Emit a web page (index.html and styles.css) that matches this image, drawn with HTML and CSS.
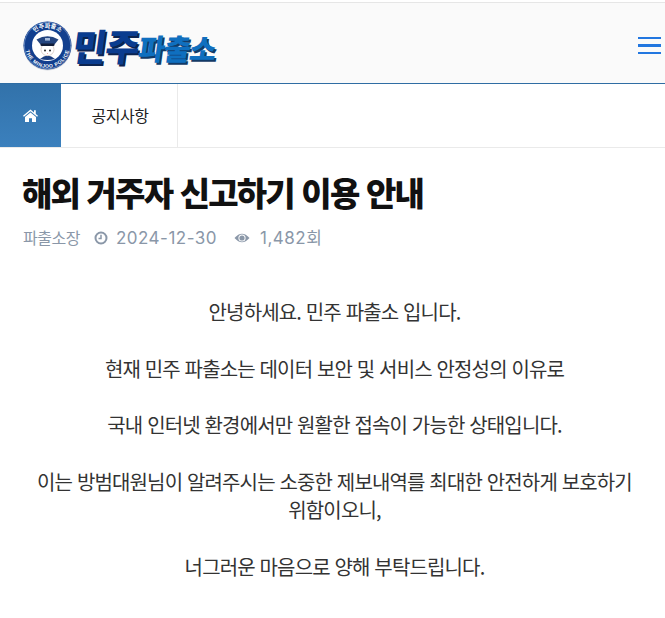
FILE: index.html
```html
<!DOCTYPE html>
<html lang="ko">
<head>
    <meta charset="UTF-8">
    <meta name="viewport" content="width=device-width, initial-scale=1.0">
    <title>해외 거주자 신고하기 이용 안내</title>
    <link rel="stylesheet" href="styles.css">
</head>
<body>
    <!-- header -->
    <header class="site-header">
        <a class="logo" href="#">
            <svg class="logo__badge" width="49" height="50" viewBox="0 0 49 50" xmlns="http://www.w3.org/2000/svg">
                <defs>
                    <path id="arcTop" d="M6.500 24.500 A18 18 0 0 1 42.500 24.500"></path>
                    <path id="arcBottom" d="M2.600 21 A22.200 22.200 0 1 0 46.400 21"></path>
                </defs>
                <circle cx="24.500" cy="25.500" r="24" fill="#d5d8de"></circle>
                <circle cx="24.500" cy="24.500" r="24" fill="#123f8e"></circle>
                <circle cx="24.500" cy="24.500" r="23.200" fill="none" stroke="#6f8fc4" stroke-width="0.800"></circle>
                <circle cx="24.500" cy="24.500" r="15.500" fill="#fff"></circle>
                <text class="logo__arc" font-size="6" fill="#fff"><textPath href="#arcTop" startOffset="50%" text-anchor="middle">민주파출소</textPath></text>
                <text class="logo__arc" font-size="5" fill="#fff" letter-spacing="0.500"><textPath href="#arcBottom" startOffset="50%" text-anchor="middle">THE MINJOO POLICE</textPath></text>
                <!-- police character -->
                <path d="M17 38 Q24.500 31 32 38 Q24.500 40 17 38 Z" fill="#1c3f80"></path>
                <ellipse cx="24.500" cy="28.500" rx="6.500" ry="6.200" fill="#fff" stroke="#c9b7ad" stroke-width="0.600"></ellipse>
                <circle cx="22" cy="29.500" r="1" fill="#222"></circle>
                <circle cx="27" cy="29.500" r="1" fill="#222"></circle>
                <path d="M23.800 32 H25.200 L24.500 32.800 Z" fill="#d9534f"></path>
                <path d="M13.500 18.500 Q24.500 12 35.500 18.500 L31.500 23.500 H17.500 Z" fill="#24457f"></path>
                <rect x="17.500" y="22.500" width="14" height="2.400" rx="1.200" fill="#111d38"></rect>
                <rect x="22" y="17" width="5" height="2.600" fill="#a9bedd"></rect>
            </svg>
            <span class="logo__text"><b class="logo__main">민주</b><b class="logo__sub">파출소</b></span>
        </a>
        <button class="menu-btn" type="button" aria-label="메뉴">
            <span></span><span></span><span></span>
        </button>
    </header>

    <nav class="tabs">
        <a class="tabs__home" href="#" aria-label="홈">
            <svg width="15" height="13" viewBox="0 0 15 13" xmlns="http://www.w3.org/2000/svg">
                <path d="M7.500 0.500 L11 3.400 V1.200 H12.800 V4.900 L15 6.800 L14.100 7.800 L7.500 2.300 L0.900 7.800 L0 6.800 Z" fill="#fff"></path>
                <path d="M7.500 3.400 L13 8 V13 H9 V9.200 H6 V13 H2 V8 Z" fill="#fff"></path>
            </svg>
        </a>
        <a class="tabs__item" href="#">공지사항</a>
    </nav>

    <main class="post">
        <h1 class="post__title">해외 거주자 신고하기 이용 안내</h1>
        <div class="post__meta">
            <span class="post__author">파출소장</span>
            <span class="post__meta-item">
                <svg width="14" height="14" viewBox="0 0 14 14" xmlns="http://www.w3.org/2000/svg">
                    <circle cx="7" cy="7" r="5.500" fill="none" stroke="#8a97a8" stroke-width="2"></circle>
                    <path d="M7 3.800 V7.500 H4.500" fill="none" stroke="#8a97a8" stroke-width="1.500"></path>
                </svg>
                2024-12-30
            </span>
            <span class="post__meta-item post__meta-item--views">
                <svg width="16" height="12" viewBox="0 0 16 12" xmlns="http://www.w3.org/2000/svg">
                    <path d="M0.500 6 Q8 -2.500 15.500 6 Q8 14.500 0.500 6 Z" fill="#8a97a8"></path>
                    <circle cx="8" cy="6" r="3.600" fill="#fff"></circle>
                    <circle cx="8" cy="6" r="2.600" fill="#8a97a8"></circle>
                </svg>
                1,482회
            </span>
        </div>
        <div class="post__body">
            <p>안녕하세요. 민주 파출소 입니다.</p>
            <p>현재 민주 파출소는 데이터 보안 및 서비스 안정성의 이유로</p>
            <p>국내 인터넷 환경에서만 원활한 접속이 가능한 상태입니다.</p>
            <p>이는 방범대원님이 알려주시는 소중한 제보내역를 최대한 안전하게 보호하기 위함이오니,</p>
            <p>너그러운 마음으로 양해 부탁드립니다.</p>
        </div>
    </main>
</body>
</html>
```

FILE: styles.css
```css
*{
    margin: 0;
    padding: 0;
    box-sizing: border-box;
}
body{
    background-color: #fff;
    font-family: "Noto Sans CJK KR", "Open Sans", sans-serif;
    color: #333;
    overflow: hidden;
}
a{
    text-decoration: none;
    color: inherit;
}
.site-header{
    height: 82px;
    margin-top: 2px;
    border-top: 1px solid #e6e6e6;
    border-bottom: 1px solid #2f6da3;
    background-color: #fafafa;
    display: flex;
    align-items: center;
    justify-content: space-between;
    padding: 0 4px 0 23px;
}
.logo{
    display: flex;
    align-items: center;
    gap: 1px;
    margin-top: 6px;
}
.logo__arc{
    font-family: "Liberation Sans", "Noto Sans CJK KR", sans-serif;
    font-weight: 700;
}
.logo__text{
    display: flex;
    align-items: flex-end;
    transform: skewX(-8deg);
    font-weight: 900;
    letter-spacing: -1px;
    margin-top: -2px;
}
.logo__main{
    font-size: 37px;
    line-height: 44px;
    font-weight: 900;
    color: #0a3c8f;
    text-shadow: 2px 2px 0 #0c2450;
}
.logo__sub{
    font-size: 29px;
    line-height: 40px;
    font-weight: 900;
    color: #0f6fbf;
    text-shadow: 2px 2px 0 #123a66;
}
.menu-btn{
    width: 23px;
    height: 17px;
    margin-top: 5px;
    border: none;
    background: none;
    display: flex;
    flex-direction: column;
    justify-content: space-between;
}
.menu-btn span{
    display: block;
    height: 2px;
    background-color: #2277e0;
}
.menu-btn span:nth-child(2){
    height: 3px;
}
.tabs{
    height: 64px;
    display: flex;
    border-bottom: 1px solid #eaeaea;
}
.tabs__home{
    width: 61px;
    display: flex;
    align-items: center;
    justify-content: center;
    background: linear-gradient(#3272aa, #3b80bd);
}
.tabs__item{
    width: 117px;
    display: flex;
    align-items: center;
    justify-content: center;
    border-right: 1px solid #eaeaea;
    padding: 0 0 2px 2px;
    font-size: 16px;
    letter-spacing: -0.5px;
    color: #222;
}
.post{
    padding: 22px 22px 0;
}
.post__title{
    font-size: 33px;
    line-height: 44px;
    font-weight: 900;
    letter-spacing: -1.8px;
    color: #111;
}
.post__meta{
    margin-top: 12px;
    display: flex;
    align-items: center;
    gap: 14px;
    font-family: "Inter", "Noto Sans CJK KR", sans-serif;
    font-size: 17px;
    line-height: 24px;
    color: #8a97a8;
    letter-spacing: 0.5px;
}
.post__author{
    font-size: 16px;
    letter-spacing: -0.5px;
    margin-left: 1px;
}
.post__meta-item{
    display: flex;
    align-items: center;
    gap: 8px;
}
.post__meta-item--views{
    margin-left: 3px;
    gap: 10px;
}
.post__body{
    margin-top: 48px;
    margin-left: 10px;
    margin-right: 6px;
    text-align: center;
    font-size: 20px;
    line-height: 28.5px;
    letter-spacing: -0.85px;
    color: #333;
}
.post__body p{
    margin-bottom: 28px;
}
```
